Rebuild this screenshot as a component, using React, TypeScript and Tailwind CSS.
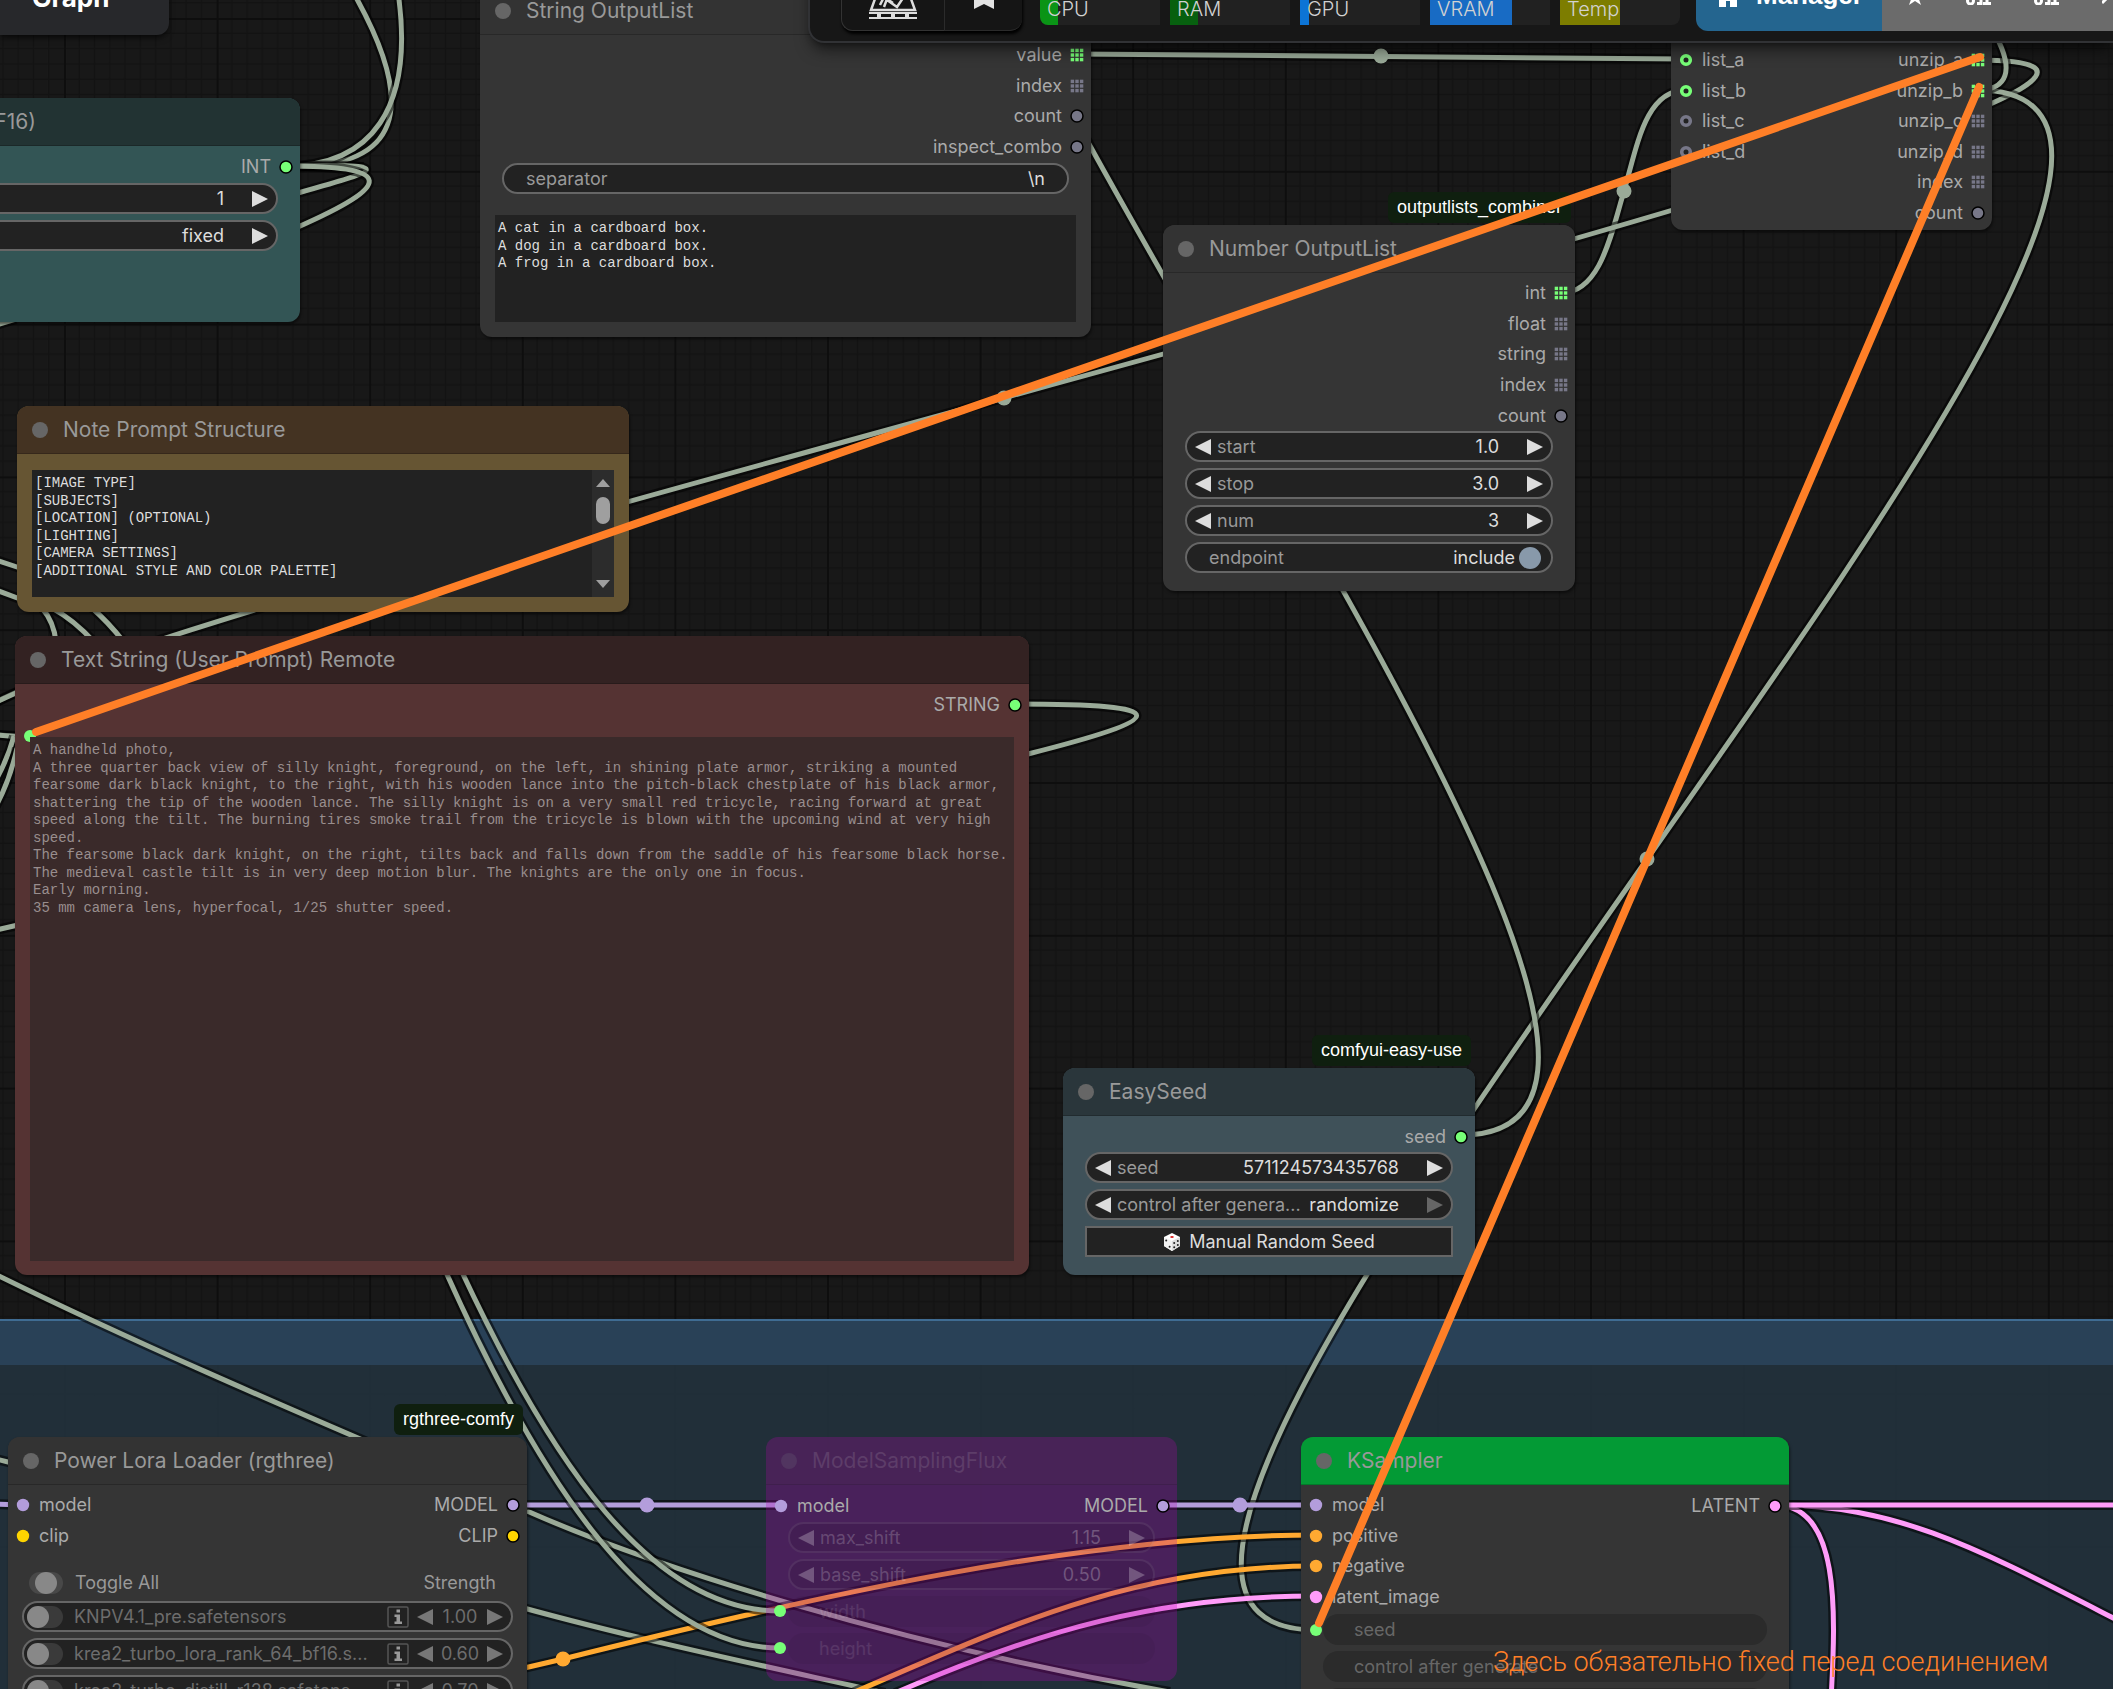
import { useId, useState } from "react";
import type { ReactNode } from "react";

type Point = [number, number];

const COLORS = {
  green: "#7f7",
  gray: "#778",
  model: "#b39ddb",
  clip: "#ffd500",
  cond: "#ffa931",
  latent: "#ff9cf9",
  link: "#9aaa98",
};

// Cubic with horizontal handles a quarter of the distance long.
function spline([x1, y1]: Point, [x2, y2]: Point) {
  const d = Math.hypot(x2 - x1, y2 - y1) / 4;
  return `M${x1} ${y1} C${x1 + d} ${y1} ${x2 - d} ${y2} ${x2} ${y2}`;
}

const links: { d: string; color: string }[] = [
  { d: "M1076 54 L1685 59", color: COLORS.link },
  { d: "M1561 293 C1600 293 1611 235 1624 191 S1645 90 1686 90", color: COLORS.link },
  { d: spline([1977, 60], [30, 736]), color: COLORS.link },
  { d: spline([1977, 90], [1316, 1630]), color: COLORS.link },
  { d: "M1977 90 C2008 90 2014 70 1996 36", color: COLORS.link },
  { d: spline([1461, 1135], [988, -370]), color: COLORS.link },
  { d: "M286 166 C400 170 420 110 353 -8", color: COLORS.link },
  { d: "M286 166 C370 166 415 110 398 -8", color: COLORS.link },
  { d: "M286 166 L364 167", color: COLORS.link },
  { d: "M286 166 C394 164 388 168 298 193", color: COLORS.link },
  { d: "M286 166 C397 166 393 185 298 227", color: COLORS.link },
  { d: "M1015 704 C1180 704 1170 718 1028 754", color: COLORS.link },
  { d: "M-4 325 L16 319", color: COLORS.link },
  { d: "M-4 560 L20 568", color: COLORS.link },
  { d: "M-4 590 L20 599", color: COLORS.link },
  { d: "M42 608 Q54 622 56 642", color: COLORS.link },
  { d: "M52 608 Q74 620 94 642", color: COLORS.link },
  { d: "M92 608 Q108 622 124 642", color: COLORS.link },
  { d: "M-4 702 L18 692", color: COLORS.link },
  { d: "M-4 735 L20 737", color: COLORS.link },
  { d: "M-4 780 Q8 758 14 736", color: COLORS.link },
  { d: "M-4 806 Q10 780 17 748", color: COLORS.link },
  { d: "M-4 930 L18 925", color: COLORS.link },
  { d: "M-5 1274 C180 1365 400 1455 527 1511 S900 1645 1170 1692", color: COLORS.link },
  { d: "M520 1607 C640 1640 760 1665 885 1693", color: COLORS.link },
  { d: "M-4 1459 L12 1463", color: COLORS.link },
  { d: "M-4 1504 L23 1505", color: COLORS.model },
  { d: "M513 1505 L780 1505", color: COLORS.model },
  { d: "M1163 1505 L1316 1505", color: COLORS.model },
  { d: "M520 1669 L563 1659 C800 1600 1080 1535 1316 1535", color: COLORS.cond },
  { d: "M850 1694 C1000 1630 1130 1566 1316 1566", color: COLORS.cond },
  { d: "M895 1693 C1040 1630 1160 1596 1316 1596", color: COLORS.latent },
  { d: "M445 1270 C530 1460 640 1648 780 1648", color: COLORS.link },
  { d: "M461 1270 C550 1460 650 1611 780 1611", color: COLORS.link },
  { d: "M1775 1505 C1900 1505 1980 1550 2125 1624", color: COLORS.latent },
  { d: "M1775 1505 C1840 1505 1836 1610 1831 1700", color: COLORS.latent },
  { d: "M1775 1505 L4000 1505", color: COLORS.latent },
];

const midpoints: { x: number; y: number; color: string }[] = [
  { x: 1381, y: 56, color: COLORS.link },
  { x: 1624, y: 191, color: COLORS.link },
  { x: 1004, y: 398, color: COLORS.link },
  { x: 1647, y: 859, color: COLORS.link },
  { x: 647, y: 1505, color: COLORS.model },
  { x: 1240, y: 1505, color: COLORS.model },
  { x: 563, y: 1659, color: COLORS.cond },
];

function Grid() {
  const steps = [1, 2, 3, 4, 5, 6, 7, 8, 9];
  return (
    <svg className="absolute inset-0 h-full w-full" aria-hidden="true">
      <defs>
        <pattern id="grid" x="64" y="18" width="152.6" height="152.8" patternUnits="userSpaceOnUse">
          {steps.map((n) => (
            <path
              key={n}
              d={`M${n * 15.26} 0V153M0 ${n * 15.28}H153`}
              stroke="#131313"
              strokeWidth="1.5"
            />
          ))}
          <path d="M0 0V153M0 0H153" stroke="#0e0e0e" strokeWidth="4" />
        </pattern>
      </defs>
      <rect width="100%" height="100%" fill="url(#grid)" />
    </svg>
  );
}

function Links() {
  return (
    <svg className="absolute inset-0 h-full w-full" fill="none" aria-hidden="true">
      {links.map((link) => (
        <g key={link.d}>
          <path d={link.d} stroke="#000" strokeOpacity="0.55" strokeWidth="10" />
          <path d={link.d} stroke={link.color} strokeWidth="5" />
        </g>
      ))}
      {midpoints.map((p) => (
        <circle key={`${p.x}-${p.y}`} cx={p.x} cy={p.y} r="7.5" fill={p.color} />
      ))}
    </svg>
  );
}

type SlotKind = "dot" | "input" | "grid" | "ring";

function SlotMark({ kind, color }: { kind: SlotKind; color: string }) {
  return (
    <svg className="h-[14px] w-[14px] shrink-0" viewBox="0 0 14 14" aria-hidden="true">
      {kind === "dot" && <circle cx="7" cy="7" r="6" fill={color} stroke="#000" strokeWidth="1.5" />}
      {kind === "input" && <circle cx="7" cy="7" r="6.2" fill={color} />}
      {kind === "ring" && <circle cx="7" cy="7" r="4.3" fill="#222" stroke={color} strokeWidth="3.6" />}
      {kind === "grid" &&
        [0, 1, 2].map((r) =>
          [0, 1, 2].map((c) => (
            <rect key={`${r}${c}`} x={0.7 + c * 4.6} y={0.7 + r * 4.6} width="3.4" height="3.4" fill={color} />
          ))
        )}
    </svg>
  );
}

type Slot = { label: string; kind: SlotKind; color: string };

const slotHeights = ["h-0", "h-[31px]", "h-[61px]", "h-[92px]", "h-[122px]", "h-[153px]", "h-[183px]"];

function Slots({ inputs = [], outputs = [] }: { inputs?: Slot[]; outputs?: Slot[] }) {
  return (
    <div className="mt-[5px] flex items-start justify-between text-[18px] leading-6 text-[#aaa]">
      <ul className={`grid auto-rows-fr ${slotHeights[inputs.length]}`}>
        {inputs.map((s) => (
          <li key={s.label} className="flex items-center gap-[9px] pl-2">
            <SlotMark kind={s.kind} color={s.color} />
            {s.label}
          </li>
        ))}
      </ul>
      <ul className={`grid auto-rows-fr ${slotHeights[outputs.length]}`}>
        {outputs.map((s) => (
          <li key={s.label} className="flex items-center justify-end gap-2 pr-[7px]">
            {s.label}
            <SlotMark kind={s.kind} color={s.color} />
          </li>
        ))}
      </ul>
    </div>
  );
}

function Badge({ children }: { children: ReactNode }) {
  return (
    <span className="absolute right-1 bottom-full mb-[2px] flex h-[31px] items-center rounded-md bg-[#0f1f0f] px-[9px] font-['Liberation_Sans',sans-serif] text-[18px] whitespace-nowrap text-white">
      {children}
    </span>
  );
}

type NodeProps = {
  title?: string;
  place: string;
  header: string;
  badge?: string;
  children: ReactNode;
};

function Node({ title, place, header, badge, children }: NodeProps) {
  return (
    <section className={`absolute flex flex-col rounded-xl shadow-[1px_2px_3px_rgba(0,0,0,0.5)] ${place}`}>
      {badge && <Badge>{badge}</Badge>}
      <header
        className={`flex h-[48px] shrink-0 items-center gap-[15px] rounded-t-xl border-b border-black/20 pl-[15px] ${header}`}
      >
        <span className="h-4 w-4 rounded-full bg-[#666]" />
        {title && <h2 className="text-[21px] leading-6 whitespace-nowrap text-[#999]">{title}</h2>}
      </header>
      {children}
    </section>
  );
}

function Arrow({ left, className = "fill-[#ddd]" }: { left?: boolean; className?: string }) {
  return (
    <svg className={`h-4 w-4 ${className}`} viewBox="0 0 16 16" aria-hidden="true">
      <path d={left ? "M16 0V16L0 8z" : "M0 0V16L16 8z"} />
    </svg>
  );
}

type StepperProps = {
  label: string;
  value: string;
  endDisabled?: boolean;
  frame?: string;
  labelClass?: string;
  valueClass?: string;
  arrowClass?: string;
};

function Stepper({
  label,
  value,
  endDisabled,
  frame = "border-[#666] bg-[#222]",
  labelClass = "text-[#999]",
  valueClass = "text-[#ddd]",
  arrowClass = "fill-[#ddd]",
}: StepperProps) {
  const id = useId();
  return (
    <div className={`flex h-[31px] items-center rounded-full border-2 px-2 text-[18px] leading-6 ${frame}`}>
      <button type="button" aria-label={`Previous ${label}`}>
        <Arrow left className={arrowClass} />
      </button>
      <label htmlFor={id} className={`ml-[6px] whitespace-nowrap ${labelClass}`}>
        {label}
      </label>
      <input
        id={id}
        defaultValue={value}
        className={`ml-1 w-0 min-w-0 flex-1 bg-transparent text-right outline-none ${valueClass}`}
      />
      <button type="button" aria-label={`Next ${label}`} className="ml-[28px]" disabled={endDisabled}>
        <Arrow className={endDisabled ? "fill-[#666]" : arrowClass} />
      </button>
    </div>
  );
}

function SeedNode() {
  return (
    <Node
      title="(Step 1) Seed (BF16)"
      place="-left-[110px] top-[98px] w-[410px] h-[224px] bg-[#355]"
      header="bg-[#233] justify-end pr-[264px]"
    >
      <Slots outputs={[{ label: "INT", kind: "dot", color: COLORS.green }]} />
      <div className="mx-[22px] mt-px flex flex-col gap-1.5">
        <Stepper label="value" value="1" />
        <Stepper label="mode" value="fixed" />
      </div>
    </Node>
  );
}

function StringListNode() {
  const id = useId();
  return (
    <Node
      title="String OutputList"
      place="left-[480px] -top-[13px] w-[611px] h-[350px] bg-[#353535]"
      header="bg-[#333]"
    >
      <Slots
        outputs={[
          { label: "value", kind: "grid", color: COLORS.green },
          { label: "index", kind: "grid", color: COLORS.gray },
          { label: "count", kind: "dot", color: COLORS.gray },
          { label: "inspect_combo", kind: "dot", color: COLORS.gray },
        ]}
      />
      <div className="mx-[22px] mt-px flex h-[31px] shrink-0 items-center rounded-full border-2 border-[#666] bg-[#222] px-[22px] text-[18px] leading-6">
        <label htmlFor={id} className="text-[#999]">
          separator
        </label>
        <input id={id} defaultValue="\n" className="min-w-0 flex-1 bg-transparent text-right text-[#ddd] outline-none" />
      </div>
      <textarea
        aria-label="values"
        defaultValue={"A cat in a cardboard box.\nA dog in a cardboard box.\nA frog in a cardboard box."}
        className="mx-[15px] mt-[21px] h-[107px] resize-none overflow-hidden bg-[#222] px-[3px] py-[5px] font-['Liberation_Mono',monospace] text-sm leading-tight text-[#ddd] outline-none"
      />
    </Node>
  );
}

function NoteNode() {
  const lines = [
    "[IMAGE TYPE]",
    "[SUBJECTS]",
    "[LOCATION] (OPTIONAL)",
    "[LIGHTING]",
    "[CAMERA SETTINGS]",
    "[ADDITIONAL STYLE AND COLOR PALETTE]",
  ];
  return (
    <Node title="Note Prompt Structure" place="left-[17px] top-[406px] w-[612px] h-[206px] bg-[#653]" header="bg-[#432]">
      <div className="mx-[15px] mt-4 flex h-[127px] bg-[#222]">
        <textarea
          aria-label="Note"
          defaultValue={lines.join("\n")}
          className="flex-1 resize-none overflow-hidden bg-transparent px-[3px] py-[5px] font-['Liberation_Mono',monospace] text-sm leading-tight text-[#ddd] outline-none"
        />
        <div className="flex w-[22px] flex-col items-center bg-[#2c2c2c] py-[9px]" aria-hidden="true">
          <svg className="h-2 w-[14px] fill-[#9f9f9f]" viewBox="0 0 14 8">
            <path d="M7 0L14 8H0z" />
          </svg>
          <span className="mt-2.5 h-[27px] w-[14px] rounded-full bg-[#9f9f9f]" />
          <svg className="mt-auto h-2 w-[14px] fill-[#9f9f9f]" viewBox="0 0 14 8">
            <path d="M7 8L14 0H0z" />
          </svg>
        </div>
      </div>
    </Node>
  );
}

function PromptNode() {
  const [text, setText] = useState(
    [
      "A handheld photo,",
      "A three quarter back view of silly knight, foreground, on the left, in shining plate armor, striking a mounted fearsome dark black knight, to the right, with his wooden lance into the pitch-black chestplate of his black armor, shattering the tip of the wooden lance. The silly knight is on a very small red tricycle, racing forward at great speed along the tilt. The burning tires smoke trail from the tricycle is blown with the upcoming wind at very high speed.",
      "The fearsome black dark knight, on the right, tilts back and falls down from the saddle of his fearsome black horse.",
      "The medieval castle tilt is in very deep motion blur. The knights are the only one in focus.",
      "Early morning.",
      "35 mm camera lens, hyperfocal, 1/25 shutter speed.",
    ].join("\n")
  );
  return (
    <Node
      title="Text String (User Prompt) Remote"
      place="left-[15px] top-[636px] w-[1014px] h-[639px] bg-[#533]"
      header="bg-[#322]"
    >
      <Slots outputs={[{ label: "STRING", kind: "dot", color: COLORS.green }]} />
      <span className="absolute top-[94px] left-[9px] h-3 w-3 rounded-full bg-[#7f7]" />
      <textarea
        aria-label="Prompt"
        value={text}
        onChange={(e) => setText(e.target.value)}
        className="relative mx-[15px] mt-[17px] mb-[14px] flex-1 resize-none overflow-hidden bg-[#3a2a2a] px-[3px] py-[5px] font-['Liberation_Mono',monospace] text-sm leading-tight text-[#998e8e] outline-none"
      />
    </Node>
  );
}

function NumberListNode() {
  const id = useId();
  return (
    <Node
      title="Number OutputList"
      place="left-[1163px] top-[225px] w-[412px] h-[366px] bg-[#353535]"
      header="bg-[#333]"
      badge="outputlists_combiner"
    >
      <Slots
        outputs={[
          { label: "int", kind: "grid", color: COLORS.green },
          { label: "float", kind: "grid", color: COLORS.gray },
          { label: "string", kind: "grid", color: COLORS.gray },
          { label: "index", kind: "grid", color: COLORS.gray },
          { label: "count", kind: "dot", color: COLORS.gray },
        ]}
      />
      <div className="mx-[22px] flex flex-col gap-1.5">
        <Stepper label="start" value="1.0" />
        <Stepper label="stop" value="3.0" />
        <Stepper label="num" value="3" />
        <div className="flex h-[31px] items-center rounded-full border-2 border-[#666] bg-[#222] pr-2.5 pl-[22px] text-[18px] leading-6">
          <label htmlFor={id} className="flex-1 text-[#999]">
            endpoint
          </label>
          <span className="mr-1 text-[#ddd]">include</span>
          <input id={id} type="checkbox" defaultChecked className="h-[22px] w-[22px] appearance-none rounded-full bg-[#89a]" />
        </div>
      </div>
    </Node>
  );
}

function UnzipNode() {
  return (
    <Node place="left-[1671px] -top-2 w-[321px] h-[238px] bg-[#353535]" header="bg-[#333]">
      <Slots
        inputs={[
          { label: "list_a", kind: "ring", color: COLORS.green },
          { label: "list_b", kind: "ring", color: COLORS.green },
          { label: "list_c", kind: "ring", color: COLORS.gray },
          { label: "list_d", kind: "ring", color: COLORS.gray },
        ]}
        outputs={[
          { label: "unzip_a", kind: "grid", color: COLORS.green },
          { label: "unzip_b", kind: "grid", color: COLORS.green },
          { label: "unzip_c", kind: "grid", color: COLORS.gray },
          { label: "unzip_d", kind: "grid", color: COLORS.gray },
          { label: "index", kind: "grid", color: COLORS.gray },
          { label: "count", kind: "dot", color: COLORS.gray },
        ]}
      />
    </Node>
  );
}

function Dice() {
  return (
    <svg className="h-[18px] w-[18px]" viewBox="0 0 18 18" aria-hidden="true">
      <path d="M9 0L17 4V13L9 18L1 13V4z" fill="#fff" />
      <path d="M9 8L17 4V13L9 18z" fill="#ddd" />
      <path d="M1 4L9 8V18L1 13z" fill="#f2f2f2" />
      <ellipse cx="9" cy="4" rx="1.8" ry="1.1" fill="#d22" />
      <g fill="#222">
        <circle cx="3.2" cy="7.6" r="1" />
        <circle cx="6.6" cy="13.8" r="1" />
        <circle cx="11.2" cy="10" r="1" />
        <circle cx="11.2" cy="14.2" r="1" />
        <circle cx="14.8" cy="8" r="1" />
        <circle cx="14.8" cy="12" r="1" />
      </g>
    </svg>
  );
}

function EasySeedNode() {
  return (
    <Node
      title="EasySeed"
      place="left-[1063px] top-[1068px] w-[412px] h-[207px] bg-[#3f5159]"
      header="bg-[#2a363b]"
      badge="comfyui-easy-use"
    >
      <Slots outputs={[{ label: "seed", kind: "dot", color: COLORS.green }]} />
      <div className="mx-[22px] flex flex-col gap-1.5">
        <Stepper label="seed" value="571124573435768" />
        <Stepper label="control after genera..." value="randomize" endDisabled />
        <button
          type="button"
          className="flex h-[31px] items-center justify-center gap-2 border-2 border-[#666] bg-[#222] text-[18px] leading-6 text-[#ddd]"
        >
          <Dice />
          Manual Random Seed
        </button>
      </div>
    </Node>
  );
}

function LoraRow({ name, strength }: { name: string; strength: string }) {
  const id = useId();
  return (
    <div className="flex h-[31px] items-center rounded-full border-2 border-[#666] bg-[#222] pr-2 pl-[3px] text-[18px] leading-6 text-[#6d6d6d]">
      <span className="flex w-9 items-center rounded-full bg-[#3a3a3a]">
        <input id={id} type="checkbox" className="h-[22px] w-[22px] appearance-none rounded-full bg-[#888]" />
      </span>
      <label htmlFor={id} className="ml-[11px] flex-1 whitespace-nowrap">
        {name}
      </label>
      <button type="button" aria-label={`Info ${name}`}>
        <svg className="h-[22px] w-[22px]" viewBox="0 0 22 22" fill="none" aria-hidden="true">
          <rect x="1" y="1" width="20" height="20" rx="1.5" stroke="#555" strokeWidth="1.5" />
          <path d="M9.5 3.5H13V6.500H9.500zM7.500 8.500H13V15.500H15V18H7.500V15.500H9.500V11H7.500z" fill="#999" />
        </svg>
      </button>
      <button type="button" aria-label="Decrease strength" className="ml-2">
        <Arrow left className="fill-[#777]" />
      </button>
      <input aria-label={`Strength ${name}`} defaultValue={strength} className="w-[54px] bg-transparent text-center outline-none" />
      <button type="button" aria-label="Increase strength">
        <Arrow className="fill-[#777]" />
      </button>
    </div>
  );
}

function LoraNode() {
  const id = useId();
  return (
    <Node
      title="Power Lora Loader (rgthree)"
      place="left-2 top-[1437px] w-[519px] h-[320px] bg-[#353535]"
      header="bg-[#333]"
      badge="rgthree-comfy"
    >
      <Slots
        inputs={[
          { label: "model", kind: "input", color: COLORS.model },
          { label: "clip", kind: "input", color: COLORS.clip },
        ]}
        outputs={[
          { label: "MODEL", kind: "dot", color: COLORS.model },
          { label: "CLIP", kind: "dot", color: COLORS.clip },
        ]}
      />
      <div className="mt-[13px] mr-[31px] ml-[21px] flex h-[37px] items-center text-[18px] leading-6 text-[#999]">
        <span className="flex w-[34px] justify-center rounded-full bg-[#484848]">
          <input id={id} type="checkbox" className="h-[22px] w-[22px] appearance-none rounded-full bg-[#888]" />
        </span>
        <label htmlFor={id} className="ml-3 flex-1">
          Toggle All
        </label>
        <span>Strength</span>
      </div>
      <div className="mx-[14px] flex flex-col gap-1.5">
        <LoraRow name="KNPV4.1_pre.safetensors" strength="1.00" />
        <LoraRow name="krea2_turbo_lora_rank_64_bf16.s..." strength="0.60" />
        <LoraRow name="krea2_turbo_distill_r128.safetens..." strength="0.70" />
      </div>
    </Node>
  );
}

function LinkedField({ label, tone }: { label: string; tone: string }) {
  const id = useId();
  return (
    <div className={`flex h-[31px] items-center rounded-full pl-[31px] text-[18px] leading-6 ${tone}`}>
      <label htmlFor={id} className="whitespace-nowrap">
        {label}
      </label>
      <input id={id} disabled className="w-0 min-w-0 flex-1 bg-transparent" />
    </div>
  );
}

function FluxNode() {
  const faded = {
    frame: "border-white/8 bg-black/8",
    labelClass: "text-white/20",
    valueClass: "text-white/25",
    arrowClass: "fill-white/25",
  };
  return (
    <section className="absolute top-[1437px] left-[766px] flex h-[244px] w-[411px] flex-col rounded-xl bg-[rgba(181,0,181,0.28)]">
      <header className="flex h-[48px] shrink-0 items-center gap-[15px] rounded-t-xl border-b border-black/10 bg-[rgba(70,50,70,0.15)] pl-[15px]">
        <span className="h-4 w-4 rounded-full bg-[#513560]" />
        <h2 className="text-[21px] leading-6 text-[#5d3d69]">ModelSamplingFlux</h2>
      </header>
      <Slots
        inputs={[{ label: "model", kind: "input", color: COLORS.model }]}
        outputs={[{ label: "MODEL", kind: "dot", color: COLORS.model }]}
      />
      <div className="mx-[22px] mt-px flex flex-col gap-1.5">
        <Stepper label="max_shift" value="1.15" {...faded} />
        <Stepper label="base_shift" value="0.50" {...faded} />
        <LinkedField label="width" tone="bg-black/5 text-white/10" />
        <LinkedField label="height" tone="bg-black/5 text-white/10" />
      </div>
      <span className="absolute top-[168px] left-2 h-3 w-3 rounded-full bg-[#7f7]" />
      <span className="absolute top-[205px] left-2 h-3 w-3 rounded-full bg-[#7f7]" />
    </section>
  );
}

function KSamplerNode() {
  return (
    <Node
      title="KSampler"
      place="left-[1301px] top-[1437px] w-[488px] h-[480px] bg-[#353535]"
      header="bg-[#039a35]"
    >
      <Slots
        inputs={[
          { label: "model", kind: "input", color: COLORS.model },
          { label: "positive", kind: "input", color: COLORS.cond },
          { label: "negative", kind: "input", color: COLORS.cond },
          { label: "latent_image", kind: "input", color: COLORS.latent },
        ]}
        outputs={[{ label: "LATENT", kind: "dot", color: COLORS.latent }]}
      />
      <div className="mx-[22px] mt-0.5 flex flex-col gap-1.5">
        <LinkedField label="seed" tone="bg-[#2b2b2b] text-[#676767]" />
        <LinkedField label="control after generate" tone="bg-[#2b2b2b] text-[#676767]" />
        <LinkedField label="steps" tone="bg-[#2b2b2b] text-[#676767]" />
      </div>
      <span className="absolute top-[187px] left-[9px] h-3 w-3 rounded-full bg-[#7f7]" />
    </Node>
  );
}

const meters = [
  { label: "CPU", fill: "w-[18px] bg-[#0a9416]", shape: "rounded-l-lg" },
  { label: "RAM", fill: "w-[28px] bg-[#07600f]", shape: "" },
  { label: "GPU", fill: "w-[9px] bg-[#0c74d6]", shape: "" },
  { label: "VRAM", fill: "w-[82px] bg-[#186bc4]", shape: "" },
  { label: "Temp", fill: "w-[60px] bg-[#7d7d00]", shape: "rounded-r-lg" },
];

function TopBar() {
  return (
    <header className="absolute -top-10 right-0 left-[808px] flex h-[83px] items-end rounded-bl-2xl border-b-2 border-l-2 border-[#313235] bg-[#171717] pb-2.5 pl-[31px] shadow-lg shadow-black/50">
      <div className="mr-[18px] flex rounded-b-xl shadow-[1px_3px_3px_#000]">
        <button
          type="button"
          aria-label="Trains"
          className="flex h-[70px] w-[103px] items-end justify-center rounded-bl-xl border-b border-l border-[#333] bg-[#151515] pb-[11px]"
        >
          <svg className="h-10 w-12" viewBox="0 0 48 40" fill="none" stroke="#ddd" aria-hidden="true">
            <path d="M11 6L2 31H46L37 6" strokeWidth="2.500" />
            <path d="M11 26L14 20M15 28L18 20L24 24M18 21L28 28L34 19" strokeWidth="2.500" />
            <path d="M0 34H48M0 39H48" strokeWidth="2" />
            <path d="M10 34V39M24 34V39M38 34V39" strokeWidth="4" />
          </svg>
        </button>
        <button
          type="button"
          aria-label="Bookmarks"
          className="flex h-[70px] w-[78px] items-end justify-center rounded-br-xl border-b border-l border-[#2b2b2b] bg-[#151515] pb-[21px]"
        >
          <svg className="h-7 w-5 fill-[#e2e2e2]" viewBox="0 0 20 28" aria-hidden="true">
            <path d="M0 0H20V28L10 23L0 28z" />
          </svg>
        </button>
      </div>
      <div className="mb-1.5 flex gap-2.5">
        {meters.map((m) => (
          <div key={m.label} className={`relative h-[33px] w-[120px] overflow-hidden bg-[#212121] ${m.shape}`}>
            <div className={`absolute inset-y-0 left-0 ${m.fill}`} />
            <span className="relative flex h-full items-center pl-[7px] text-[20px] font-light text-[#d2d2d2]">{m.label}</span>
          </div>
        ))}
      </div>
      <button
        type="button"
        className="ml-4 flex h-[71px] w-[186px] items-center gap-[17px] rounded-bl-xl bg-[#24658f] pl-[21px] font-['Liberation_Sans',sans-serif] text-[26px] font-bold text-white"
      >
        <svg className="h-[22px] w-[22px] fill-white" viewBox="0 0 22 22" aria-hidden="true">
          <path d="M11 0L22 10H20V22H13V16H9V22H2V10H0z" />
        </svg>
        Manager
      </button>
      <div className="flex h-[71px] flex-1 items-end bg-[#6b6b6b] pb-[26px] pl-[25px]">
        <button type="button" aria-label="Favorites">
          <svg className="h-4 w-4 fill-white" viewBox="0 0 16 16" aria-hidden="true">
            <path d="M8 0L10 6H16L11.500 9L14 16L8 12L2 16L4.500 9L0 6H6z" />
          </svg>
        </button>
        {["Unload models", "Free memory"].map((name) => (
          <button key={name} type="button" aria-label={name} className="ml-[43px]">
            <svg className="h-4 w-[25px]" viewBox="0 0 25 16" fill="none" stroke="#fff" strokeWidth="3" aria-hidden="true">
              <circle cx="4.500" cy="12" r="3" />
              <path d="M11 14.500H15V8M17 14.500H25M21 14V6" />
            </svg>
          </button>
        ))}
        <svg className="ml-[43px] h-4 w-2 shrink-0" viewBox="0 0 8 16" fill="none" stroke="#fff" strokeWidth="3" aria-hidden="true">
          <path d="M0 0L6 8L0 14" />
        </svg>
      </div>
    </header>
  );
}

function Annotations() {
  return (
    <>
      <svg className="pointer-events-none absolute inset-0 h-full w-full" fill="none" stroke="#ff7f27" strokeWidth="8" strokeLinecap="round" aria-hidden="true">
        <path d="M1980 57L36 732" />
        <path d="M1979 87L1319 1623" />
      </svg>
      <p
        lang="ru"
        className="absolute top-[1642px] left-[1493px] font-['Roboto',sans-serif] text-[27px] leading-10 font-light whitespace-nowrap text-[#ff7f27]"
      >
        Здесь обязательно fixed перед соединением
      </p>
    </>
  );
}

export default function App() {
  return (
    <main className="relative h-screen overflow-hidden bg-[#181818] font-['Inter',sans-serif]">
      <Grid />
      <div className="absolute inset-x-0 top-[1319px] bottom-0 border-t-2 border-[#3f6c93] bg-[#22303b]/95">
        <div className="h-[44px] bg-[#294157]" />
      </div>
      <Links />
      <SeedNode />
      <StringListNode />
      <UnzipNode />
      <NumberListNode />
      <NoteNode />
      <PromptNode />
      <EasySeedNode />
      <LoraNode />
      <FluxNode />
      <KSamplerNode />
      <button
        type="button"
        className="absolute -top-10 left-0 flex h-[75px] w-[169px] items-center rounded-br-xl bg-[#27282b] pl-8 font-['Inter',sans-serif] text-[26px] font-bold text-white shadow-md shadow-black/50"
      >
        Graph
      </button>
      <TopBar />
      <Annotations />
    </main>
  );
}
